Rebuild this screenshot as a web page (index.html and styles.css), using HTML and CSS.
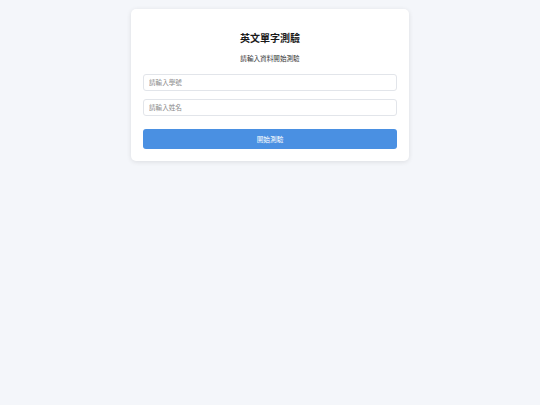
FILE: index.html
```html
<!DOCTYPE html>
<html lang="zh-Hant">
<head>
<meta charset="utf-8">
<title>英文單字測驗</title>
<link rel="stylesheet" href="styles.css">
</head>
<body>
<main class="page">
  <section class="card">
    <h1 class="title">英文單字測驗</h1>
    <p class="subtitle">請輸入資料開始測驗</p>
    <input class="field field-id" type="text" placeholder="請輸入學號">
    <input class="field field-name" type="text" placeholder="請輸入姓名">
    <button class="start" type="button">開始測驗</button>
  </section>
</main>
</body>
</html>
```
FILE: styles.css
```css
* { box-sizing: border-box; }
html, body { margin: 0; padding: 0; }
body {
  background: #f4f6fa;
  font-family: "Noto Sans CJK TC", "Noto Sans", sans-serif;
  width: 540px;
  height: 405px;
}
.page {
  display: flex;
  justify-content: center;
  padding-top: 9px;
}
.card {
  width: 278px;
  background: #ffffff;
  border-radius: 5px;
  box-shadow: 0 1px 5px rgba(0, 0, 0, 0.1);
  padding: 22px 12px 12px;
  display: flex;
  flex-direction: column;
}
.title {
  margin: 0;
  font-size: 10px;
  line-height: 14px;
  font-weight: 700;
  text-align: center;
  color: #1a1a1a;
}
.subtitle {
  margin: 9px 0 0;
  font-size: 6.6px;
  line-height: 9px;
  text-align: center;
  color: #333;
}
.field {
  display: block;
  width: 100%;
  height: 16.5px;
  margin: 0;
  padding: 0 5px;
  border: 1px solid #e2e5ea;
  border-radius: 3px;
  font-family: inherit;
  font-size: 6.6px;
  color: #333;
  background: #fff;
  outline: none;
}
.field::placeholder { color: #8a8a8a; }
.field-id { margin-top: 11px; }
.field-name { margin-top: 8.5px; }
.start {
  display: block;
  width: 100%;
  height: 20px;
  margin-top: 13.5px;
  border: none;
  border-radius: 3px;
  background: #4a90e2;
  color: #ffffff;
  font-family: inherit;
  font-size: 6.7px;
  cursor: pointer;
}
```
